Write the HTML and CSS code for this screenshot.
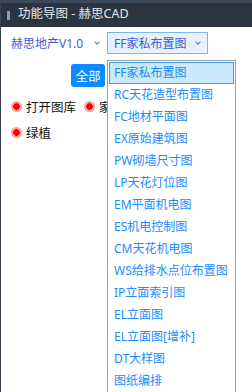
FILE: index.html
```html
<!DOCTYPE html>
<html lang="zh-CN">
<head>
    <meta charset="UTF-8">
    <title>功能导图 - 赫思CAD</title>
    <link rel="stylesheet" href="styles.css">
</head>
<body>
    <div class="window">
        <div class="titlebar">
            <span class="grip"></span>
            <span class="title">功能导图 - 赫思CAD</span>
        </div>

        <div class="content">
            <div class="top-row">
                <div class="version">
                    <span>赫思地产V1.0</span>
                    <span class="chevron"></span>
                </div>
                <div class="combo">
                    <span>FF家私布置图</span>
                    <span class="chevron"></span>
                </div>
            </div>

            <div class="filter-row">
                <button class="all-btn">全部</button>
            </div>

            <div class="radio-list">
                <label class="radio"><span class="dot"></span>打开图库</label>
                <label class="radio cut"><span class="dot"></span>家</label>
                <label class="radio"><span class="dot"></span>绿植</label>
            </div>

            <ul class="dropdown">
                <li class="active">FF家私布置图</li>
                <li>RC天花造型布置图</li>
                <li>FC地材平面图</li>
                <li>EX原始建筑图</li>
                <li>PW砌墙尺寸图</li>
                <li>LP天花灯位图</li>
                <li>EM平面机电图</li>
                <li>ES机电控制图</li>
                <li>CM天花机电图</li>
                <li>WS给排水点位布置图</li>
                <li>IP立面索引图</li>
                <li>EL立面图</li>
                <li>EL立面图[增补]</li>
                <li>DT大样图</li>
                <li>图纸编排</li>
            </ul>
        </div>
    </div>
</body>
</html>
```

FILE: styles.css
```css
* {
    margin: 0;
    padding: 0;
    box-sizing: border-box;
}

body {
    font-family: "Noto Sans", "Noto Sans CJK SC", sans-serif;
    font-size: 12px;
    background: white;
    width: 252px;
    height: 392px;
    overflow: hidden;
}

.window {
    height: 392px;
    border-left: 1px solid #3a4453;
    background: white;
}

.titlebar {
    height: 27px;
    background: #2c3440;
    border-top: 3px solid #3d4858;
    display: flex;
    align-items: center;
    padding-left: 6px;
}

.grip {
    width: 3px;
    height: 9px;
    margin-right: 8px;
    background-image: radial-gradient(circle, #9aa3ad 0.6px, transparent 0.9px);
    background-size: 1.5px 2px;
}

.title {
    color: #e6e8ea;
    font-size: 12.5px;
    line-height: 1;
    margin-top: -1px;
}

.content {
    position: relative;
    padding-left: 10px;
}

.top-row {
    display: flex;
    align-items: center;
    height: 22px;
    margin-top: 5px;
}

.version {
    display: flex;
    align-items: center;
    color: #3f5bd8;
    width: 96px;
}

.chevron {
    width: 4px;
    height: 4px;
    border-right: 1px solid #6a7a8a;
    border-bottom: 1px solid #6a7a8a;
    transform: rotate(45deg);
    margin-left: 12px;
    margin-top: -2px;
}

.combo {
    display: flex;
    align-items: center;
    height: 22px;
    width: 101px;
    padding-left: 6px;
    background: #e5f1fb;
    border: 1px solid #7eb4ea;
    color: #3f5bd8;
}

.combo .chevron {
    margin-left: 10px;
}

.filter-row {
    padding-left: 60px;
    margin-top: 10px;
}

.all-btn {
    width: 34px;
    height: 23px;
    background: #0c8cff;
    color: white;
    border: none;
    border-radius: 3px;
    font-family: inherit;
    font-size: 12.5px;
}

.radio-list {
    display: flex;
    flex-wrap: wrap;
    width: 100px;
    margin-top: 6px;
}

.radio {
    display: flex;
    align-items: center;
    height: 26px;
    width: 73px;
    color: #111;
    font-size: 12.5px;
    white-space: nowrap;
}

.radio.cut {
    width: 23px;
    overflow: hidden;
}

.radio .dot {
    flex-shrink: 0;
    width: 11px;
    height: 11px;
    border-radius: 50%;
    background: radial-gradient(circle, #ff0000 0 3px, #ffa0a0 3.5px);
    margin-right: 4px;
}

.dropdown {
    position: absolute;
    left: 106px;
    top: 28px;
    width: 129px;
    list-style: none;
    background: white;
    border: 1px solid #a0a0a0;
    padding: 1px;
}

.dropdown li {
    height: 22px;
    line-height: 20px;
    padding-left: 4px;
    color: #1a8cff;
    border: 1px solid transparent;
    white-space: nowrap;
}

.dropdown li.active {
    background: #cce8f8;
    border-color: #3c9fe0;
}
```
